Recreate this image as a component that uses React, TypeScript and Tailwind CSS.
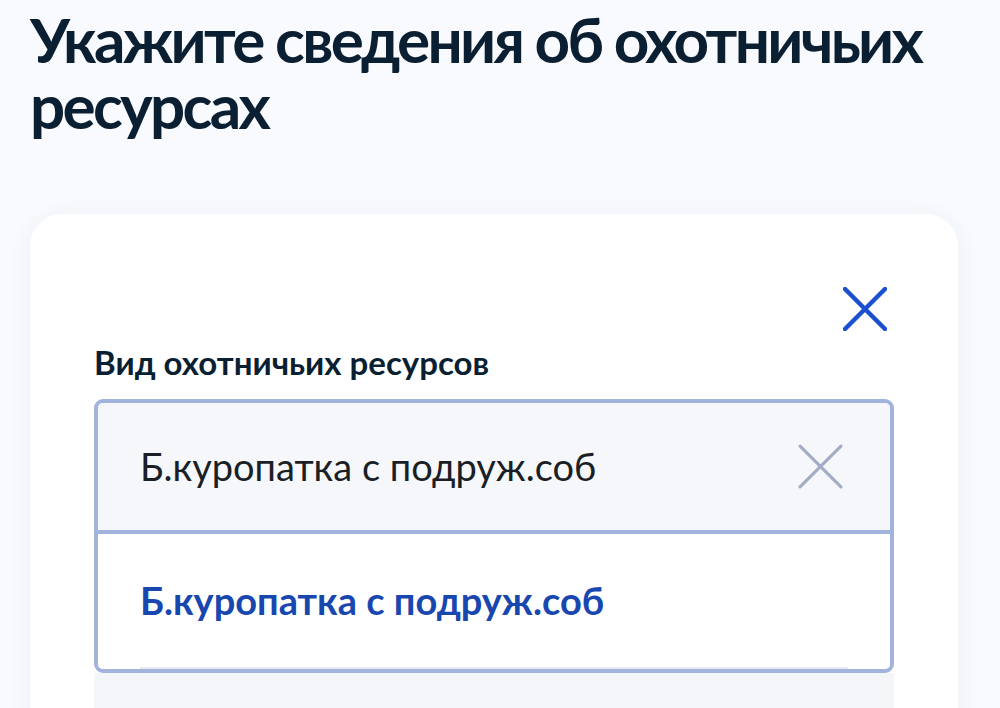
const CloseIcon = ({ className, strokeWidth }: { className: string; strokeWidth: number }) => (
  <svg viewBox="0 0 44 44" className={className} fill="none" stroke="currentColor" strokeWidth={strokeWidth} strokeLinecap="round">
    <path d="M2 2L42 42M42 2L2 42" />
  </svg>
);

const App = () => {
  return (
    <div className="h-[708px] overflow-hidden bg-[#f8fafd] font-['Lato','Noto_Sans',sans-serif]">
      <h1 className="px-[30px] pt-[6px] text-[62px] leading-[66px] font-bold tracking-[-2.7px] text-[#0b1f33]">
        Укажите сведения об охотничьих ресурсах
      </h1>

      <div className="ml-[30px] mr-[42px] mt-[76px] rounded-[32px] bg-white px-[64px] pt-[73px] pb-10 shadow-[0_4px_24px_rgba(30,60,120,0.06)]">
        <div className="flex justify-end pr-[7px]">
          <CloseIcon className="h-[44px] w-[44px] text-[#1a4fd0]" strokeWidth={4.5} />
        </div>

        <div className="mt-[11px] text-[33px] leading-[40px] font-bold text-[#0b1f33]">Вид охотничьих ресурсов</div>

        <div className="mt-[17px] overflow-hidden rounded-[9px] border-[4px] border-[#a2b3dd]">
          <div className="flex h-[131px] items-center justify-between border-b-[4px] border-[#a2b3dd] bg-[#f5f7fa] pl-[42px] pr-[47px]">
            <span className="text-[38px] text-[#1a1f26]">Б.куропатка с подруж.соб</span>
            <CloseIcon className="h-[45px] w-[45px] text-[#a3acc6]" strokeWidth={3} />
          </div>
          <div className="px-[42px] bg-white">
            <div className="flex h-[135px] items-center border-b-[2px] border-[#e6e9ef]">
              <span className="text-[38px] font-bold text-[#1947b0]">Б.куропатка с подруж.соб</span>
            </div>
          </div>
        </div>

        <div className="h-[60px] bg-[#f4f6fa]" />
      </div>
    </div>
  );
};

export default App;
